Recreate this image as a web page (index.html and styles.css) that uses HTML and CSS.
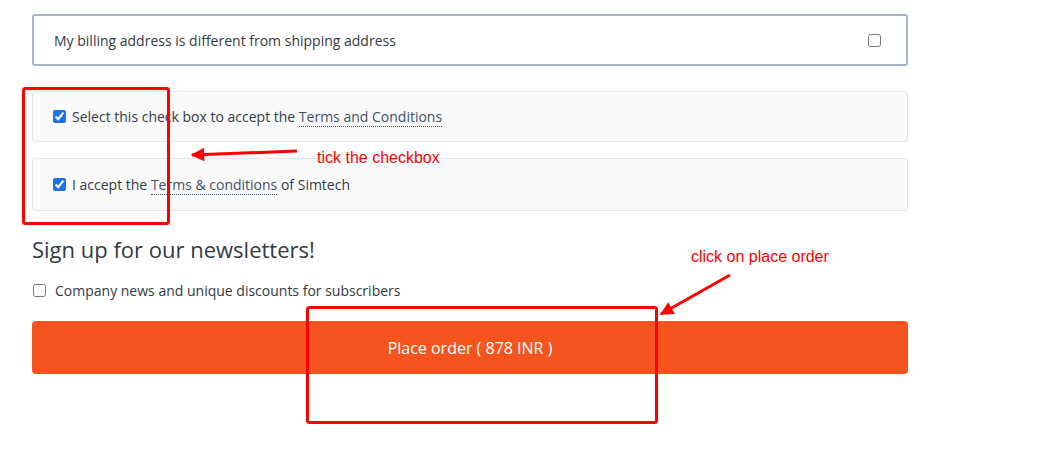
FILE: index.html
```html
<!DOCTYPE html>
<html lang="en">
<head>
<meta charset="utf-8">
<title>Checkout</title>
<link rel="stylesheet" href="styles.css">
</head>
<body>
<div class="checkout">
  <label class="billing">
    <span>My billing address is different from shipping address</span>
    <input type="checkbox" class="cb">
  </label>

  <label class="terms">
    <input type="checkbox" class="cb" checked>
    <span>Select this check box to accept the <a class="dotted">Terms and Conditions</a></span>
  </label>

  <label class="terms terms-second">
    <input type="checkbox" class="cb" checked>
    <span>I accept the <a class="dotted">Terms &amp; conditions</a> of Simtech</span>
  </label>

  <h2 class="news-title">Sign up for our newsletters!</h2>

  <label class="news-row">
    <input type="checkbox" class="cb">
    <span>Company news and unique discounts for subscribers</span>
  </label>

  <button class="place-order" type="button">Place order ( 878 INR )</button>
</div>

<svg class="notes" width="1046" height="467" viewBox="0 0 1046 467">
  <defs>
    <marker id="head" viewBox="0 0 10 10" refX="9" refY="5" markerWidth="5" markerHeight="4.5" orient="auto" markerUnits="strokeWidth">
      <path d="M0 0 L10 5 L0 10 z" fill="#ff0000"/>
    </marker>
  </defs>
  <rect x="23.5" y="88.5" width="145" height="135" rx="2" fill="none" stroke="#ff0000" stroke-width="3"/>
  <rect x="307.5" y="307.5" width="349" height="115" rx="2" fill="none" stroke="#ff0000" stroke-width="3"/>
  <line x1="297" y1="151" x2="192" y2="155" stroke="#ff0000" stroke-width="3" marker-end="url(#head)"/>
  <line x1="730" y1="275" x2="661" y2="314" stroke="#ff0000" stroke-width="3" marker-end="url(#head)"/>
  <text x="317" y="163" class="note-text">tick the checkbox</text>
  <text x="691" y="262" class="note-text">click on place order</text>
</svg>
</body>
</html>
```

FILE: styles.css
```css
html, body {
  margin: 0;
  padding: 0;
  background: #ffffff;
}

body {
  font-family: "Open Sans", "Noto Sans", sans-serif;
  font-size: 14px;
  color: #333a44;
  position: relative;
  min-height: 467px;
}

.checkout {
  width: 876px;
  padding: 14px 0 0 32px;
  display: flex;
  flex-direction: column;
}

.cb {
  width: 13px;
  height: 13px;
  margin: 0;
  flex: none;
  accent-color: #1a73e8;
}

.billing {
  box-sizing: border-box;
  height: 52px;
  border: 2px solid #a4b5c7;
  border-radius: 3px;
  padding: 0 25px 0 20px;
  display: flex;
  align-items: center;
  justify-content: space-between;
}

.terms {
  box-sizing: border-box;
  height: 51px;
  background: #fafafb;
  border: 1px solid #e1e6eb;
  border-radius: 3px;
  padding: 0 20px;
  display: flex;
  align-items: center;
  gap: 6px;
  margin-top: 25px;
}

.terms-second {
  margin-top: 16px;
  height: 53px;
}

.dotted {
  color: #3f5166;
  text-decoration: none;
  border-bottom: 1px dotted #3f5166;
}

.news-title {
  margin: 23px 0 0;
  font-size: 22px;
  font-weight: 400;
  line-height: 30px;
  color: #333a44;
}

.news-row {
  margin-top: 16px;
  height: 20px;
  display: flex;
  align-items: center;
  gap: 9px;
  padding-left: 1px;
}

.place-order {
  margin-top: 21px;
  height: 53px;
  border: 0;
  border-radius: 4px;
  background: #f6541e;
  color: #ffffff;
  font-family: "Open Sans", "Noto Sans", sans-serif;
  font-size: 16px;
}

.notes {
  position: absolute;
  left: 0;
  top: 0;
  width: 1046px;
  height: 467px;
  overflow: visible;
  pointer-events: none;
}

.note-text {
  font-family: "Liberation Sans", Arial, sans-serif;
  font-size: 16px;
  fill: #ff0000;
}
```
